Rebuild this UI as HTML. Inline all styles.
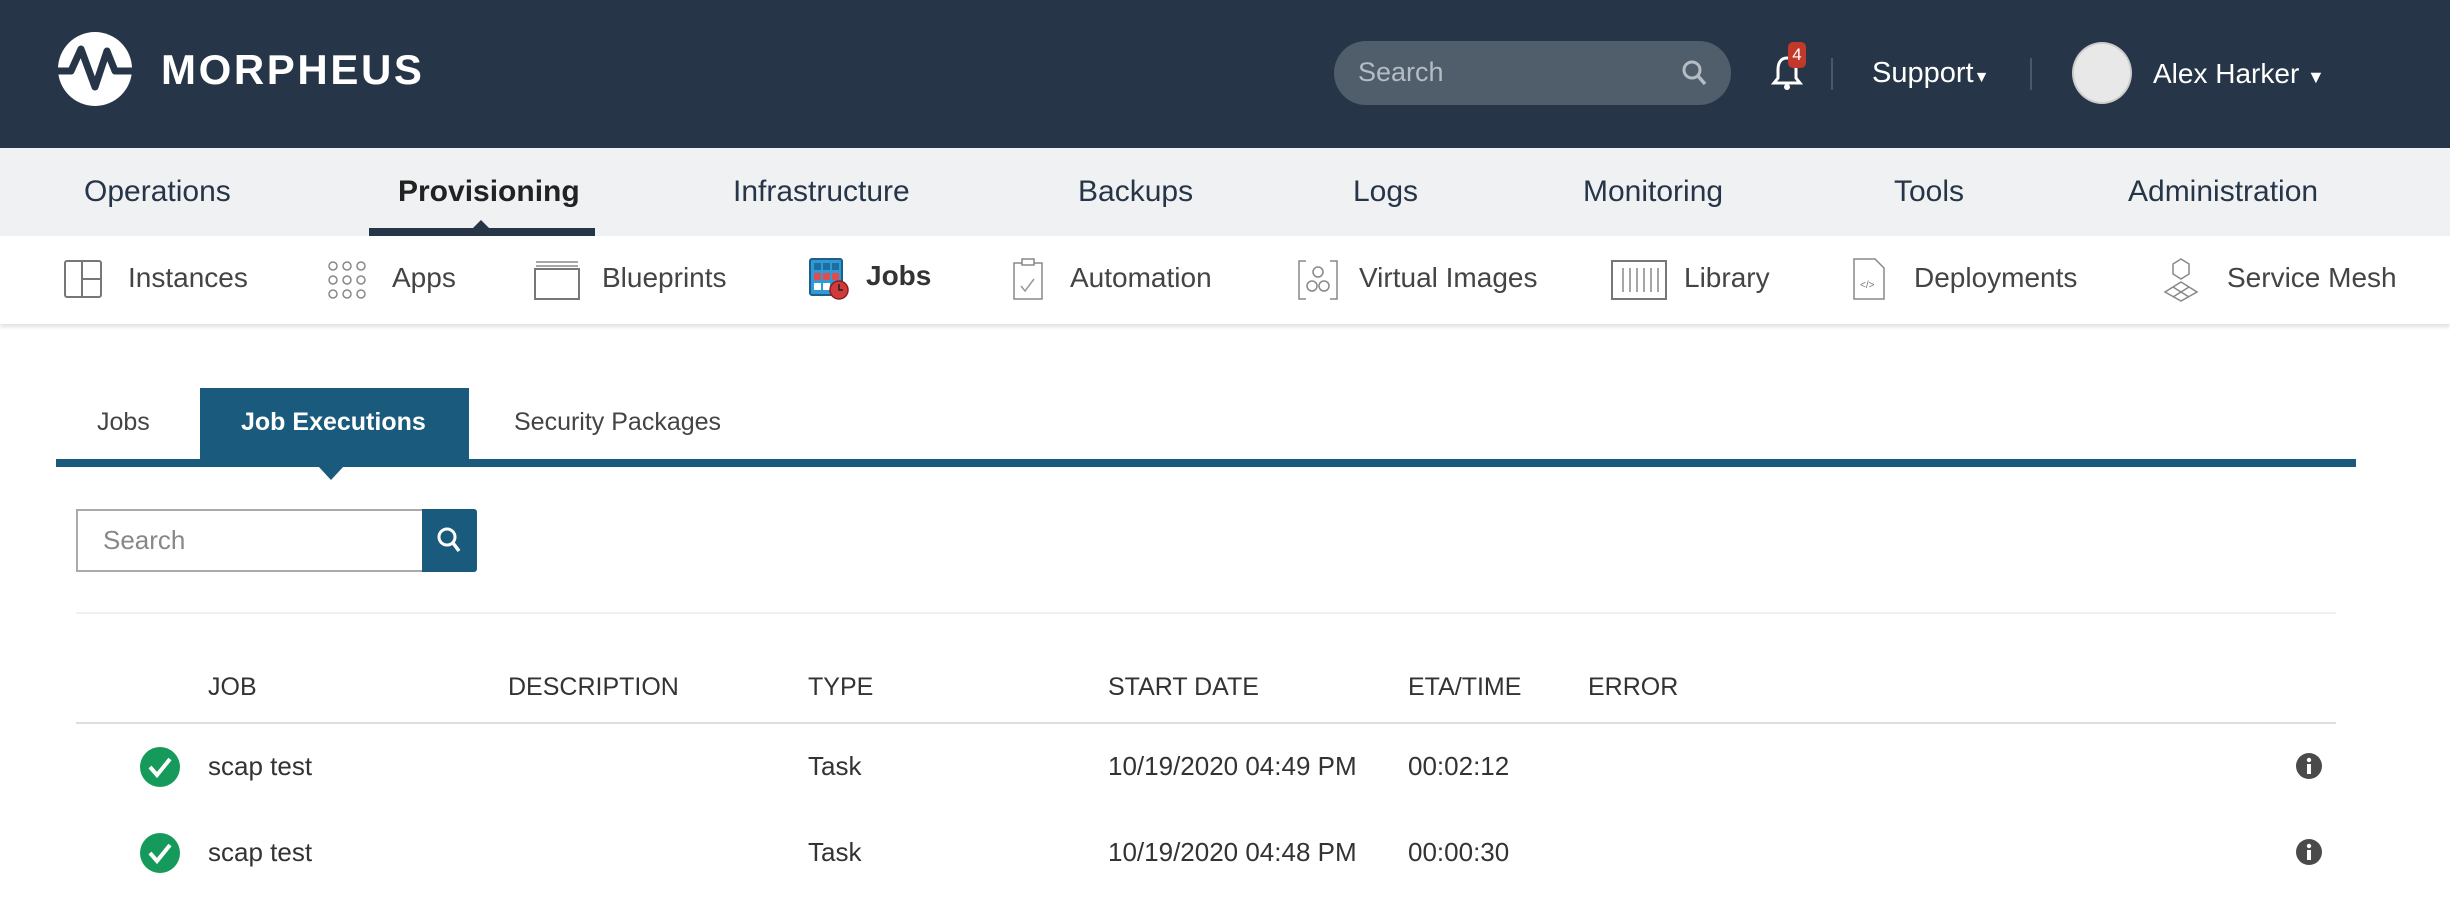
<!DOCTYPE html>
<html><head><meta charset="utf-8"><style>
*{margin:0;padding:0;box-sizing:border-box}
body{width:2450px;height:898px;overflow:hidden;background:#fff;font-family:"Liberation Sans",sans-serif;color:#333;position:relative}
.abs{position:absolute;white-space:nowrap}
#hdr{position:absolute;left:0;top:0;width:2450px;height:148px;background:#263547}
#nav{position:absolute;left:0;top:148px;width:2450px;height:88px;background:#f0f1f3}
#sub{position:absolute;left:0;top:236px;width:2450px;height:88px;background:#fff;box-shadow:0 3px 4px rgba(0,0,0,.12)}
.nv{font-size:30px;color:#263547;top:175px}
.sn{font-size:28px;color:#444;top:262px}
.th{font-size:25px;color:#333;top:673px}
.td{font-size:26px;color:#333}
</style></head><body>
<div id="hdr"></div>
<svg class="abs" style="left:57px;top:31px" width="76" height="76" viewBox="0 0 76 76"><circle cx="38" cy="38" r="37" fill="#fff"/><path d="M0 40 H14 L24 18 L38 56 L50 20 L58 40 H76" fill="none" stroke="#263547" stroke-width="7" stroke-linejoin="round"/></svg>
<div class="abs" style="left:161px;top:46px;font-size:42px;color:#fff;letter-spacing:2.6px;font-weight:bold">MORPHEUS</div>
<div class="abs" style="left:1334px;top:41px;width:397px;height:64px;border-radius:32px;background:#505e6b"></div>
<div class="abs" style="left:1358px;top:57px;font-size:27px;color:#b5bcc3">Search</div>
<svg class="abs" style="left:1680px;top:58px" width="30" height="30" viewBox="0 0 30 30"><circle cx="12" cy="12" r="8" fill="none" stroke="#b5bcc3" stroke-width="3"/><path d="M18 18l7 8" stroke="#b5bcc3" stroke-width="3.5"/></svg>
<svg class="abs" style="left:1770px;top:52px" width="34" height="42" viewBox="0 0 34 42"><path d="M17 6c-7 0-9 6-9 12v8l-4 5h26l-4-5v-8c0-6-2-12-9-12z" fill="none" stroke="#fff" stroke-width="3"/><circle cx="17" cy="35" r="3" fill="#fff"/></svg>
<div class="abs" style="left:1788px;top:42px;width:18px;height:26px;border-radius:5px;background:#c0392b;color:#fff;font-size:17px;text-align:center;line-height:26px">4</div>
<div class="abs" style="left:1831px;top:58px;width:2px;height:32px;background:#4b5868"></div>
<div class="abs" style="left:1872px;top:57px;font-size:29px;color:#fff">Support<span style="font-size:16px">▼</span></div>
<div class="abs" style="left:2030px;top:58px;width:2px;height:32px;background:#4b5868"></div>
<div class="abs" style="left:2072px;top:42px;width:60px;height:62px;border-radius:50%;background:#e8e8e8;border:2px solid #ccc"></div>
<div class="abs" style="left:2153px;top:58px;font-size:28px;color:#fff">Alex Harker <span style="font-size:18px">▼</span></div>
<div id="nav"></div>
<div class="abs nv" style="left:84px">Operations</div>
<div class="abs nv" style="left:398px;font-weight:bold;color:#222">Provisioning</div>
<div class="abs nv" style="left:733px">Infrastructure</div>
<div class="abs nv" style="left:1078px">Backups</div>
<div class="abs nv" style="left:1353px">Logs</div>
<div class="abs nv" style="left:1583px">Monitoring</div>
<div class="abs nv" style="left:1894px">Tools</div>
<div class="abs nv" style="left:2128px">Administration</div>
<div class="abs" style="left:369px;top:228px;width:226px;height:8px;background:#263547"></div>
<div class="abs" style="left:472px;top:220px;width:0;height:0;border-left:9px solid transparent;border-right:9px solid transparent;border-bottom:9px solid #263547"></div>
<div id="sub"></div>
<svg class="abs" style="left:64px;top:260px" width="38" height="38"><rect x="1" y="1" width="36" height="36" rx="2" fill="none" stroke="#777" stroke-width="2"/><path d="M18 1V37M18 19H37" stroke="#777" stroke-width="2"/></svg>
<div class="abs sn" style="left:128px">Instances</div>
<svg class="abs" style="left:327px;top:260px" width="40" height="40"><g fill="none" stroke="#888" stroke-width="1.5"><circle cx="6" cy="6" r="4"/><circle cx="20" cy="6" r="4"/><circle cx="34" cy="6" r="4"/><circle cx="6" cy="20" r="4"/><circle cx="20" cy="20" r="4"/><circle cx="34" cy="20" r="4"/><circle cx="6" cy="34" r="4"/><circle cx="20" cy="34" r="4"/><circle cx="34" cy="34" r="4"/></g></svg>
<div class="abs sn" style="left:392px">Apps</div>
<svg class="abs" style="left:534px;top:260px" width="46" height="40"><path d="M2 2H44M2 6H44" stroke="#888" stroke-width="1.5"/><rect x="1" y="9" width="44" height="30" fill="none" stroke="#777" stroke-width="2"/></svg>
<div class="abs sn" style="left:602px">Blueprints</div>
<svg class="abs" style="left:809px;top:258px" width="42" height="42"><rect x="1" y="1" width="32" height="36" rx="2" fill="#2f9ad6" stroke="#1e5e8a" stroke-width="2"/><g fill="#1e6f9f"><rect x="5" y="5" width="7" height="7"/><rect x="14" y="5" width="7" height="7"/><rect x="23" y="5" width="7" height="7"/></g><g fill="#e34c4c"><rect x="5" y="15" width="7" height="7"/><rect x="14" y="15" width="7" height="7"/><rect x="23" y="15" width="7" height="7"/></g><g fill="#fff"><rect x="5" y="25" width="7" height="7"/><rect x="14" y="25" width="7" height="7"/></g><circle cx="30" cy="32" r="9" fill="#d03a3a" stroke="#8a1f1f" stroke-width="1.5"/><path d="M30 26v6h4" stroke="#222" stroke-width="1.5" fill="none"/></svg>
<div class="abs sn" style="left:866px;font-weight:bold;color:#333;top:260px">Jobs</div>
<svg class="abs" style="left:1013px;top:258px" width="30" height="42"><rect x="1" y="5" width="28" height="36" fill="none" stroke="#888" stroke-width="1.5"/><rect x="9" y="1" width="12" height="6" fill="#fff" stroke="#888" stroke-width="1.5"/><path d="M8 28l4 5 9-12" stroke="#999" fill="none" stroke-width="1.5"/></svg>
<div class="abs sn" style="left:1070px">Automation</div>
<svg class="abs" style="left:1298px;top:260px" width="40" height="40"><g fill="none" stroke="#888" stroke-width="1.5"><path d="M8 1H1V39H8M32 1H39V39H32"/><circle cx="20" cy="12" r="5"/><circle cx="14" cy="26" r="5"/><circle cx="26" cy="26" r="5"/></g></svg>
<div class="abs sn" style="left:1359px">Virtual Images</div>
<svg class="abs" style="left:1611px;top:260px" width="56" height="40"><rect x="1" y="1" width="54" height="38" fill="none" stroke="#777" stroke-width="2"/><path d="M12 8V32M19 8V32M26 8V32M33 8V32M40 8V32M47 8V32" stroke="#888" stroke-width="1.5"/></svg>
<div class="abs sn" style="left:1684px">Library</div>
<svg class="abs" style="left:1853px;top:258px" width="32" height="42"><path d="M1 1H22L31 10V41H1Z" fill="none" stroke="#888" stroke-width="1.5"/><text x="7" y="30" font-size="10" fill="#777" font-family="Liberation Sans">&lt;/&gt;</text></svg>
<div class="abs sn" style="left:1914px">Deployments</div>
<svg class="abs" style="left:2163px;top:258px" width="36" height="44"><g fill="none" stroke="#888" stroke-width="1.5"><path d="M18 1L26 6V16L18 21L10 16V6Z"/><path d="M18 24L34 34L18 43L2 34Z"/><path d="M10 29L26 39M26 29L10 39"/></g></svg>
<div class="abs sn" style="left:2227px">Service Mesh</div>

<div class="abs" style="left:200px;top:388px;width:269px;height:75px;background:#1a5a7c"></div>
<div class="abs" style="left:56px;top:459px;width:2300px;height:8px;background:#1a5a7c"></div>
<div class="abs" style="left:318px;top:466px;width:0;height:0;border-left:13px solid transparent;border-right:13px solid transparent;border-top:14px solid #1a5a7c"></div>
<div class="abs" style="left:97px;top:408px;font-size:25px;color:#444">Jobs</div>
<div class="abs" style="left:241px;top:408px;font-size:25px;color:#fff;font-weight:bold">Job Executions</div>
<div class="abs" style="left:514px;top:408px;font-size:25px;color:#444">Security Packages</div>
<div class="abs" style="left:76px;top:509px;width:348px;height:63px;border:2px solid #aaa;background:#fff"></div>
<div class="abs" style="left:103px;top:525px;font-size:26px;color:#888">Search</div>
<div class="abs" style="left:422px;top:509px;width:55px;height:63px;background:#1a5a7c;border-radius:0 3px 3px 0"></div>
<svg class="abs" style="left:434px;top:524px" width="30" height="32"><circle cx="13" cy="13" r="8" fill="none" stroke="#fff" stroke-width="3"/><path d="M19 19l6 8" stroke="#fff" stroke-width="3.5"/></svg>
<div class="abs" style="left:76px;top:612px;width:2260px;height:2px;background:#f0f0f0"></div>
<div class="abs th" style="left:208px">JOB</div>
<div class="abs th" style="left:508px">DESCRIPTION</div>
<div class="abs th" style="left:808px">TYPE</div>
<div class="abs th" style="left:1108px">START DATE</div>
<div class="abs th" style="left:1408px">ETA/TIME</div>
<div class="abs th" style="left:1588px">ERROR</div>
<div class="abs" style="left:76px;top:722px;width:2260px;height:2px;background:#ddd"></div>

<svg class="abs" style="left:139px;top:746px" width="42" height="42"><circle cx="21" cy="21" r="20" fill="#159a5c"/><path d="M11 21l7 8 13-16" stroke="#fff" stroke-width="4" fill="none"/></svg>
<div class="abs td" style="left:208px;top:751px">scap test</div>
<div class="abs td" style="left:808px;top:751px">Task</div>
<div class="abs td" style="left:1108px;top:751px">10/19/2020 04:49 PM</div>
<div class="abs td" style="left:1408px;top:751px">00:02:12</div>
<svg class="abs" style="left:2296px;top:753px" width="26" height="26"><circle cx="13" cy="13" r="13" fill="#4a4a4a"/><rect x="11" y="11" width="4" height="10" fill="#fff"/><circle cx="13" cy="7" r="2.2" fill="#fff"/></svg>

<svg class="abs" style="left:139px;top:832px" width="42" height="42"><circle cx="21" cy="21" r="20" fill="#159a5c"/><path d="M11 21l7 8 13-16" stroke="#fff" stroke-width="4" fill="none"/></svg>
<div class="abs td" style="left:208px;top:837px">scap test</div>
<div class="abs td" style="left:808px;top:837px">Task</div>
<div class="abs td" style="left:1108px;top:837px">10/19/2020 04:48 PM</div>
<div class="abs td" style="left:1408px;top:837px">00:00:30</div>
<svg class="abs" style="left:2296px;top:839px" width="26" height="26"><circle cx="13" cy="13" r="13" fill="#4a4a4a"/><rect x="11" y="11" width="4" height="10" fill="#fff"/><circle cx="13" cy="7" r="2.2" fill="#fff"/></svg>
</body></html>
